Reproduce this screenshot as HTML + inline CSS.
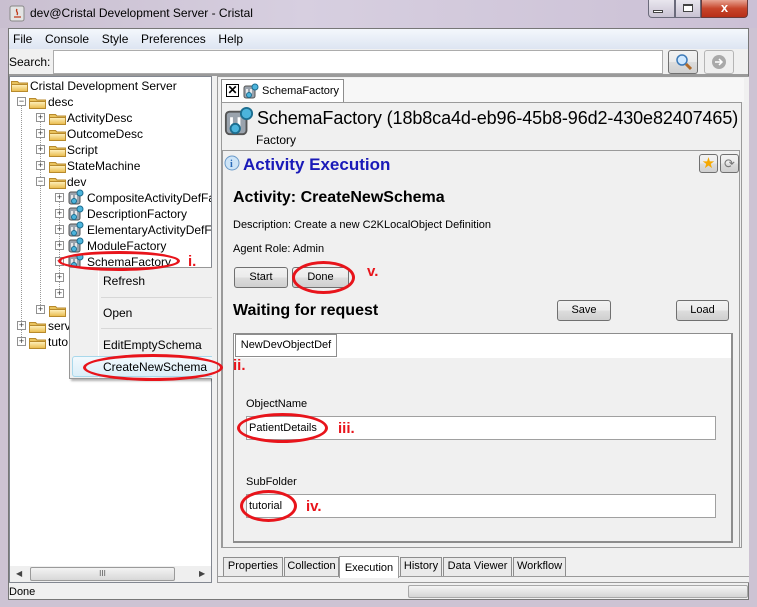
<!DOCTYPE html>
<html><head><meta charset="utf-8">
<style>
*{box-sizing:border-box;margin:0;padding:0}
body{width:757px;height:607px;overflow:hidden;position:relative;background:#cdc3d3;font-family:"Liberation Sans",sans-serif;font-size:11px;color:#000}
.a{position:absolute;white-space:nowrap}
.btn{position:absolute;border:1px solid #707070;border-radius:3px;background:linear-gradient(#f2f2f2,#ebebeb 50%,#dddddd 51%,#cfcfcf);text-align:center;font-size:11px;line-height:19px}
.fold{position:absolute;width:17px;height:13px}
.exp{position:absolute;width:9px;height:9px;border:1px solid #919191;background:#fff;font-size:9px;line-height:7px;text-align:center;color:#333}
.ell{position:absolute;border:3px solid #e8141b;border-radius:50%}
.red{position:absolute;color:#e8141b;font-weight:bold;font-size:15px}
.tab{position:absolute;border:1px solid #8d8d8d;border-bottom:none;background:#eaeaea;font-size:11px;text-align:center;line-height:17px}
.dot{position:absolute;border-left:1px dotted #999}
.t{position:absolute;white-space:nowrap;font-size:12px}
</style></head><body>
<svg width="0" height="0" style="position:absolute"><defs>
<linearGradient id="fg" x1="0" y1="0" x2="0" y2="1"><stop offset="0" stop-color="#fff3c2"/><stop offset="1" stop-color="#e8b949"/></linearGradient>
<symbol id="folder" viewBox="0 0 17 13"><path d="M0.5 2.5h6l1.5 1.5h8.5v8.5h-16z" fill="#e9c35e" stroke="#b88a2c"/><path d="M0.5 5.5h16v7h-16z" fill="url(#fg)" stroke="#b88a2c"/></symbol>
<symbol id="fact" viewBox="0 0 16 16"><rect x="1" y="3" width="11" height="12" rx="2" fill="#9aa3ad" stroke="#555"/><path d="M4 6v6M8 6v6" stroke="#fff" stroke-width="1.5"/><circle cx="12" cy="4" r="3" fill="#4cb4dc" stroke="#1d6e90"/><circle cx="6" cy="12" r="2.5" fill="#4cb4dc" stroke="#1d6e90"/></symbol>
</defs></svg>

<!-- title bar -->
<div class="a" style="left:0;top:0;width:757px;height:28px;background:linear-gradient(90deg,#c9bfd0,#d7cfe0 40%,#cbc0d5)"></div>
<svg class="a" style="left:9px;top:5px" width="16" height="17"><rect x="1" y="1" width="14" height="15" rx="2" fill="#e4e4e4" stroke="#888"/><path d="M5 12h7M8 4c-2 3 2 3 0 6" stroke="#c03a1a" fill="none" stroke-width="1.3"/></svg>
<div class="a" style="left:30px;top:6px;font-size:12px">dev@Cristal Development Server - Cristal</div>
<div class="a" style="left:648px;top:0;width:27px;height:18px;border:1px solid #6b6b7b;border-top:none;border-radius:0 0 0 4px;background:linear-gradient(#e9e6ee,#c9c3d3)"></div>
<div class="a" style="left:653px;top:10px;width:10px;height:3px;border:1px solid #444;background:#fff"></div>
<div class="a" style="left:675px;top:0;width:26px;height:18px;border:1px solid #6b6b7b;border-top:none;background:linear-gradient(#e9e6ee,#c9c3d3)"></div>
<div class="a" style="left:683px;top:4px;width:10px;height:8px;border:1px solid #444;border-top-width:2px;background:#fff"></div>
<div class="a" style="left:701px;top:0;width:47px;height:18px;border:1px solid #6b3b3b;border-top:none;border-radius:0 0 4px 0;background:linear-gradient(#e8a493,#c7452b 50%,#b82f18);color:#fff;font-weight:bold;text-align:center;font-size:13px;line-height:16px">x</div>

<!-- client -->
<div class="a" style="left:8px;top:28px;width:741px;height:572px;background:#f0f0f0;border:1px solid #777"></div>
<div class="a" style="left:9px;top:29px;width:739px;height:20px;background:linear-gradient(#f4f7fc,#dde5f2)"></div>
<div class="a" style="left:13px;top:32px;font-size:12px;word-spacing:3px">File&nbsp; Console&nbsp; Style&nbsp; Preferences&nbsp; Help</div>
<div class="a" style="left:9px;top:55px;font-size:12px">Search:</div>
<div class="a" style="left:53px;top:50px;width:610px;height:24px;background:#fff;border:1px solid #acacac"></div>
<div class="btn" style="left:668px;top:50px;width:30px;height:24px"></div>
<svg class="a" style="left:674px;top:53px" width="20" height="18"><circle cx="8" cy="7" r="5" fill="#cfe8ff" stroke="#3d7ab8" stroke-width="1.5"/><path d="M12 11l5 5" stroke="#b06a2a" stroke-width="3"/></svg>
<div class="btn" style="left:704px;top:50px;width:30px;height:24px;border-color:#b5b5b5;background:#efefef"></div>
<svg class="a" style="left:710px;top:53px" width="18" height="18"><circle cx="9" cy="9" r="7" fill="#a9a9a9"/><path d="M5 9h7M9 6l3 3-3 3" stroke="#fff" stroke-width="1.5" fill="none"/></svg>
<div class="a" style="left:9px;top:74px;width:739px;height:2px;background:#9a9a9a"></div>

<!-- left tree -->
<div class="a" style="left:9px;top:76px;width:203px;height:507px;background:#fff;border:1px solid #828790"></div>
<div class="a" style="left:0;top:0;width:211px;height:607px;overflow:hidden">
<div class="dot" style="left:21px;top:99px;height:246px"></div>
<div class="dot" style="left:40px;top:115px;height:196px"></div>
<div class="dot" style="left:59px;top:195px;height:100px"></div>
<svg class="fold" style="left:11px;top:79px"><use href="#folder"/></svg>
<div class="t" style="left:30px;top:79px">Cristal Development Server</div>
<div class="exp" style="left:17px;top:97px">−</div>
<svg class="fold" style="left:29px;top:96px"><use href="#folder"/></svg>
<div class="t" style="left:48px;top:95px">desc</div>

<div class="exp" style="left:36px;top:113px">+</div><svg class="fold" style="left:49px;top:112px"><use href="#folder"/></svg><div class="t" style="left:67px;top:111px">ActivityDesc</div>
<div class="exp" style="left:36px;top:129px">+</div><svg class="fold" style="left:49px;top:128px"><use href="#folder"/></svg><div class="t" style="left:67px;top:127px">OutcomeDesc</div>
<div class="exp" style="left:36px;top:145px">+</div><svg class="fold" style="left:49px;top:144px"><use href="#folder"/></svg><div class="t" style="left:67px;top:143px">Script</div>
<div class="exp" style="left:36px;top:161px">+</div><svg class="fold" style="left:49px;top:160px"><use href="#folder"/></svg><div class="t" style="left:67px;top:159px">StateMachine</div>
<div class="exp" style="left:36px;top:177px">−</div><svg class="fold" style="left:49px;top:176px"><use href="#folder"/></svg><div class="t" style="left:67px;top:175px">dev</div>

<div class="exp" style="left:55px;top:193px">+</div><svg class="a" style="left:68px;top:189px" width="16" height="16"><use href="#fact"/></svg><div class="t" style="left:87px;top:191px">CompositeActivityDefFact</div>
<div class="exp" style="left:55px;top:209px">+</div><svg class="a" style="left:68px;top:205px" width="16" height="16"><use href="#fact"/></svg><div class="t" style="left:87px;top:207px">DescriptionFactory</div>
<div class="exp" style="left:55px;top:225px">+</div><svg class="a" style="left:68px;top:221px" width="16" height="16"><use href="#fact"/></svg><div class="t" style="left:87px;top:223px">ElementaryActivityDefFac</div>
<div class="exp" style="left:55px;top:241px">+</div><svg class="a" style="left:68px;top:237px" width="16" height="16"><use href="#fact"/></svg><div class="t" style="left:87px;top:239px">ModuleFactory</div>
<div class="exp" style="left:55px;top:257px">+</div><svg class="a" style="left:68px;top:253px" width="16" height="16"><use href="#fact"/></svg><div class="t" style="left:87px;top:255px">SchemaFactory</div>
<div class="exp" style="left:55px;top:273px">+</div>
<div class="exp" style="left:55px;top:289px">+</div>
<div class="exp" style="left:36px;top:305px">+</div><svg class="fold" style="left:49px;top:304px"><use href="#folder"/></svg>
<div class="exp" style="left:17px;top:321px">+</div><svg class="fold" style="left:29px;top:320px"><use href="#folder"/></svg><div class="t" style="left:48px;top:319px">serv</div>
<div class="exp" style="left:17px;top:337px">+</div><svg class="fold" style="left:29px;top:336px"><use href="#folder"/></svg><div class="t" style="left:48px;top:335px">tuto</div>
</div>

<!-- tree hscroll -->
<div class="a" style="left:10px;top:566px;width:201px;height:16px;background:#efefef"></div>
<div class="a" style="left:30px;top:567px;width:145px;height:14px;border:1px solid #9a9a9a;border-radius:2px;background:linear-gradient(#f3f3f3,#d8d8d8);text-align:center;font-size:8px;line-height:12px;color:#555">III</div>
<div class="a" style="left:16px;top:569px;font-size:8px;color:#444">◀</div>
<div class="a" style="left:199px;top:569px;font-size:8px;color:#444">▶</div>

<!-- context menu -->
<div class="a" style="left:69px;top:267px;width:148px;height:112px;background:#f0f0f0;border:1px solid #979797;box-shadow:2px 2px 2px rgba(0,0,0,.3)"></div>
<div class="a" style="left:98px;top:268px;width:1px;height:110px;background:#e2e3e3;border-right:1px solid #fff"></div>
<div class="a" style="left:101px;top:297px;width:113px;height:1px;background:#d7d7d7"></div>
<div class="a" style="left:101px;top:328px;width:113px;height:1px;background:#d7d7d7"></div>
<div class="a" style="left:72px;top:356px;width:142px;height:21px;border:1px solid #a8d8eb;border-radius:3px;background:linear-gradient(#f2f9fd,#dbeef8)"></div>
<div class="a" style="left:103px;top:274px;font-size:12px">Refresh</div>
<div class="a" style="left:103px;top:306px;font-size:12px">Open</div>
<div class="a" style="left:103px;top:338px;font-size:12px">EditEmptySchema</div>
<div class="a" style="left:103px;top:360px;font-size:12px">CreateNewSchema</div>

<!-- right panel -->
<div class="a" style="left:212px;top:76px;width:5px;height:507px;background:#f0f0f0"></div>
<div class="a" style="left:217px;top:76px;width:532px;height:507px;border:1px solid #9a9a9a;border-right:none;background:#f0f0f0"></div>
<div class="a" style="left:220px;top:78px;width:524px;height:24px;background:#f7f7f7"></div>
<div class="tab" style="left:221px;top:79px;width:123px;height:24px;background:#fff;text-align:left"></div>
<div class="a" style="left:226px;top:84px;width:13px;height:13px;border:1px solid #000;background:#fff;font-weight:bold;font-size:12px;line-height:11px;text-align:center">✕</div>
<svg class="a" style="left:243px;top:83px" width="16" height="16"><use href="#fact"/></svg>
<div class="a" style="left:262px;top:85px">SchemaFactory</div>
<div class="a" style="left:221px;top:102px;width:521px;height:446px;border:1px solid #9a9a9a;background:#f0f0f0"></div>
<svg class="a" style="left:224px;top:106px" width="30" height="30" viewBox="0 0 16 16"><use href="#fact"/></svg>
<div class="a" style="left:257px;top:108px;font-size:18px;letter-spacing:-0.1px">SchemaFactory (18b8ca4d-eb96-45b8-96d2-430e82407465)</div>
<div class="a" style="left:256px;top:133px;font-size:12px">Factory</div>
<div class="a" style="left:222px;top:150px;width:518px;height:397px;border:1px solid #9a9a9a;border-bottom:none"></div>
<svg class="a" style="left:223px;top:155px" width="18" height="18"><circle cx="9" cy="8" r="7" fill="#cde4f7" stroke="#6a9ac9"/><text x="7" y="12" font-size="10" font-weight="bold" fill="#2a6ab8" font-family="Liberation Serif">i</text></svg>
<div class="a" style="left:243px;top:155px;font-size:17px;font-weight:bold;color:#1a1ab8">Activity Execution</div>
<div class="btn" style="left:699px;top:154px;width:19px;height:19px;color:#f5a800;font-size:15px;line-height:17px">★</div>
<div class="btn" style="left:720px;top:154px;width:19px;height:19px;color:#777;font-size:13px;line-height:17px">⟳</div>
<div class="a" style="left:233px;top:189px;font-size:16px;font-weight:bold">Activity: CreateNewSchema</div>
<div class="a" style="left:233px;top:219px">Description: Create a new C2KLocalObject Definition</div>
<div class="a" style="left:233px;top:243px">Agent Role: Admin</div>
<div class="btn" style="left:234px;top:267px;width:54px;height:21px">Start</div>
<div class="btn" style="left:292px;top:267px;width:57px;height:21px">Done</div>
<div class="a" style="left:233px;top:302px;font-size:16px;font-weight:bold">Waiting for request</div>
<div class="btn" style="left:557px;top:300px;width:54px;height:21px">Save</div>
<div class="btn" style="left:676px;top:300px;width:53px;height:21px">Load</div>

<!-- inner tabbed pane -->
<div class="a" style="left:233px;top:333px;width:500px;height:210px;border:1px solid #8d8d8d;border-right-width:2px;border-bottom-width:2px;background:#f0f0f0"></div>
<div class="a" style="left:234px;top:334px;width:497px;height:24px;background:#fff"></div>
<div class="tab" style="left:235px;top:334px;width:102px;height:22px;background:#fff;line-height:20px">NewDevObjectDef</div>
<div class="a" style="left:235px;top:356px;width:495px;height:1px;background:#8d8d8d"></div>
<div class="a" style="left:337px;top:356px;width:393px;height:1px;background:#fff"></div>
<div class="a" style="left:246px;top:398px">ObjectName</div>
<div class="a" style="left:246px;top:416px;width:470px;height:24px;background:#fff;border:1px solid #a0a0a0"></div>
<div class="a" style="left:249px;top:422px">PatientDetails</div>
<div class="a" style="left:246px;top:476px">SubFolder</div>
<div class="a" style="left:246px;top:494px;width:470px;height:24px;background:#fff;border:1px solid #a0a0a0"></div>
<div class="a" style="left:249px;top:500px">tutorial</div>

<!-- bottom tabs -->
<div class="a" style="left:218px;top:576px;width:531px;height:1px;background:#9a9a9a"></div>
<div class="tab" style="left:223px;top:557px;width:60px;height:19px">Properties</div>
<div class="tab" style="left:284px;top:557px;width:55px;height:19px">Collection</div>
<div class="tab" style="left:339px;top:556px;width:60px;height:22px;background:#fff;border-color:#9a9a9a;line-height:22px">Execution</div>
<div class="tab" style="left:400px;top:557px;width:42px;height:19px">History</div>
<div class="tab" style="left:443px;top:557px;width:69px;height:19px">Data Viewer</div>
<div class="tab" style="left:513px;top:557px;width:53px;height:19px">Workflow</div>

<!-- status -->
<div class="a" style="left:9px;top:586px;font-size:11px">Done</div>
<div class="a" style="left:408px;top:585px;width:340px;height:13px;border:1px solid #a8a8a8;border-radius:2px;background:linear-gradient(#f4f4f4,#d5d5d5)"></div>

<!-- annotations -->
<div class="ell" style="left:58px;top:251px;width:122px;height:20px"></div>
<div class="red" style="left:188px;top:253px">i.</div>
<div class="ell" style="left:292px;top:261px;width:63px;height:33px"></div>
<div class="red" style="left:367px;top:263px">v.</div>
<div class="ell" style="left:83px;top:354px;width:140px;height:27px"></div>
<div class="red" style="left:233px;top:357px">ii.</div>
<div class="ell" style="left:237px;top:413px;width:91px;height:30px"></div>
<div class="red" style="left:338px;top:420px">iii.</div>
<div class="ell" style="left:240px;top:490px;width:57px;height:32px"></div>
<div class="red" style="left:306px;top:498px">iv.</div>
</body></html>
